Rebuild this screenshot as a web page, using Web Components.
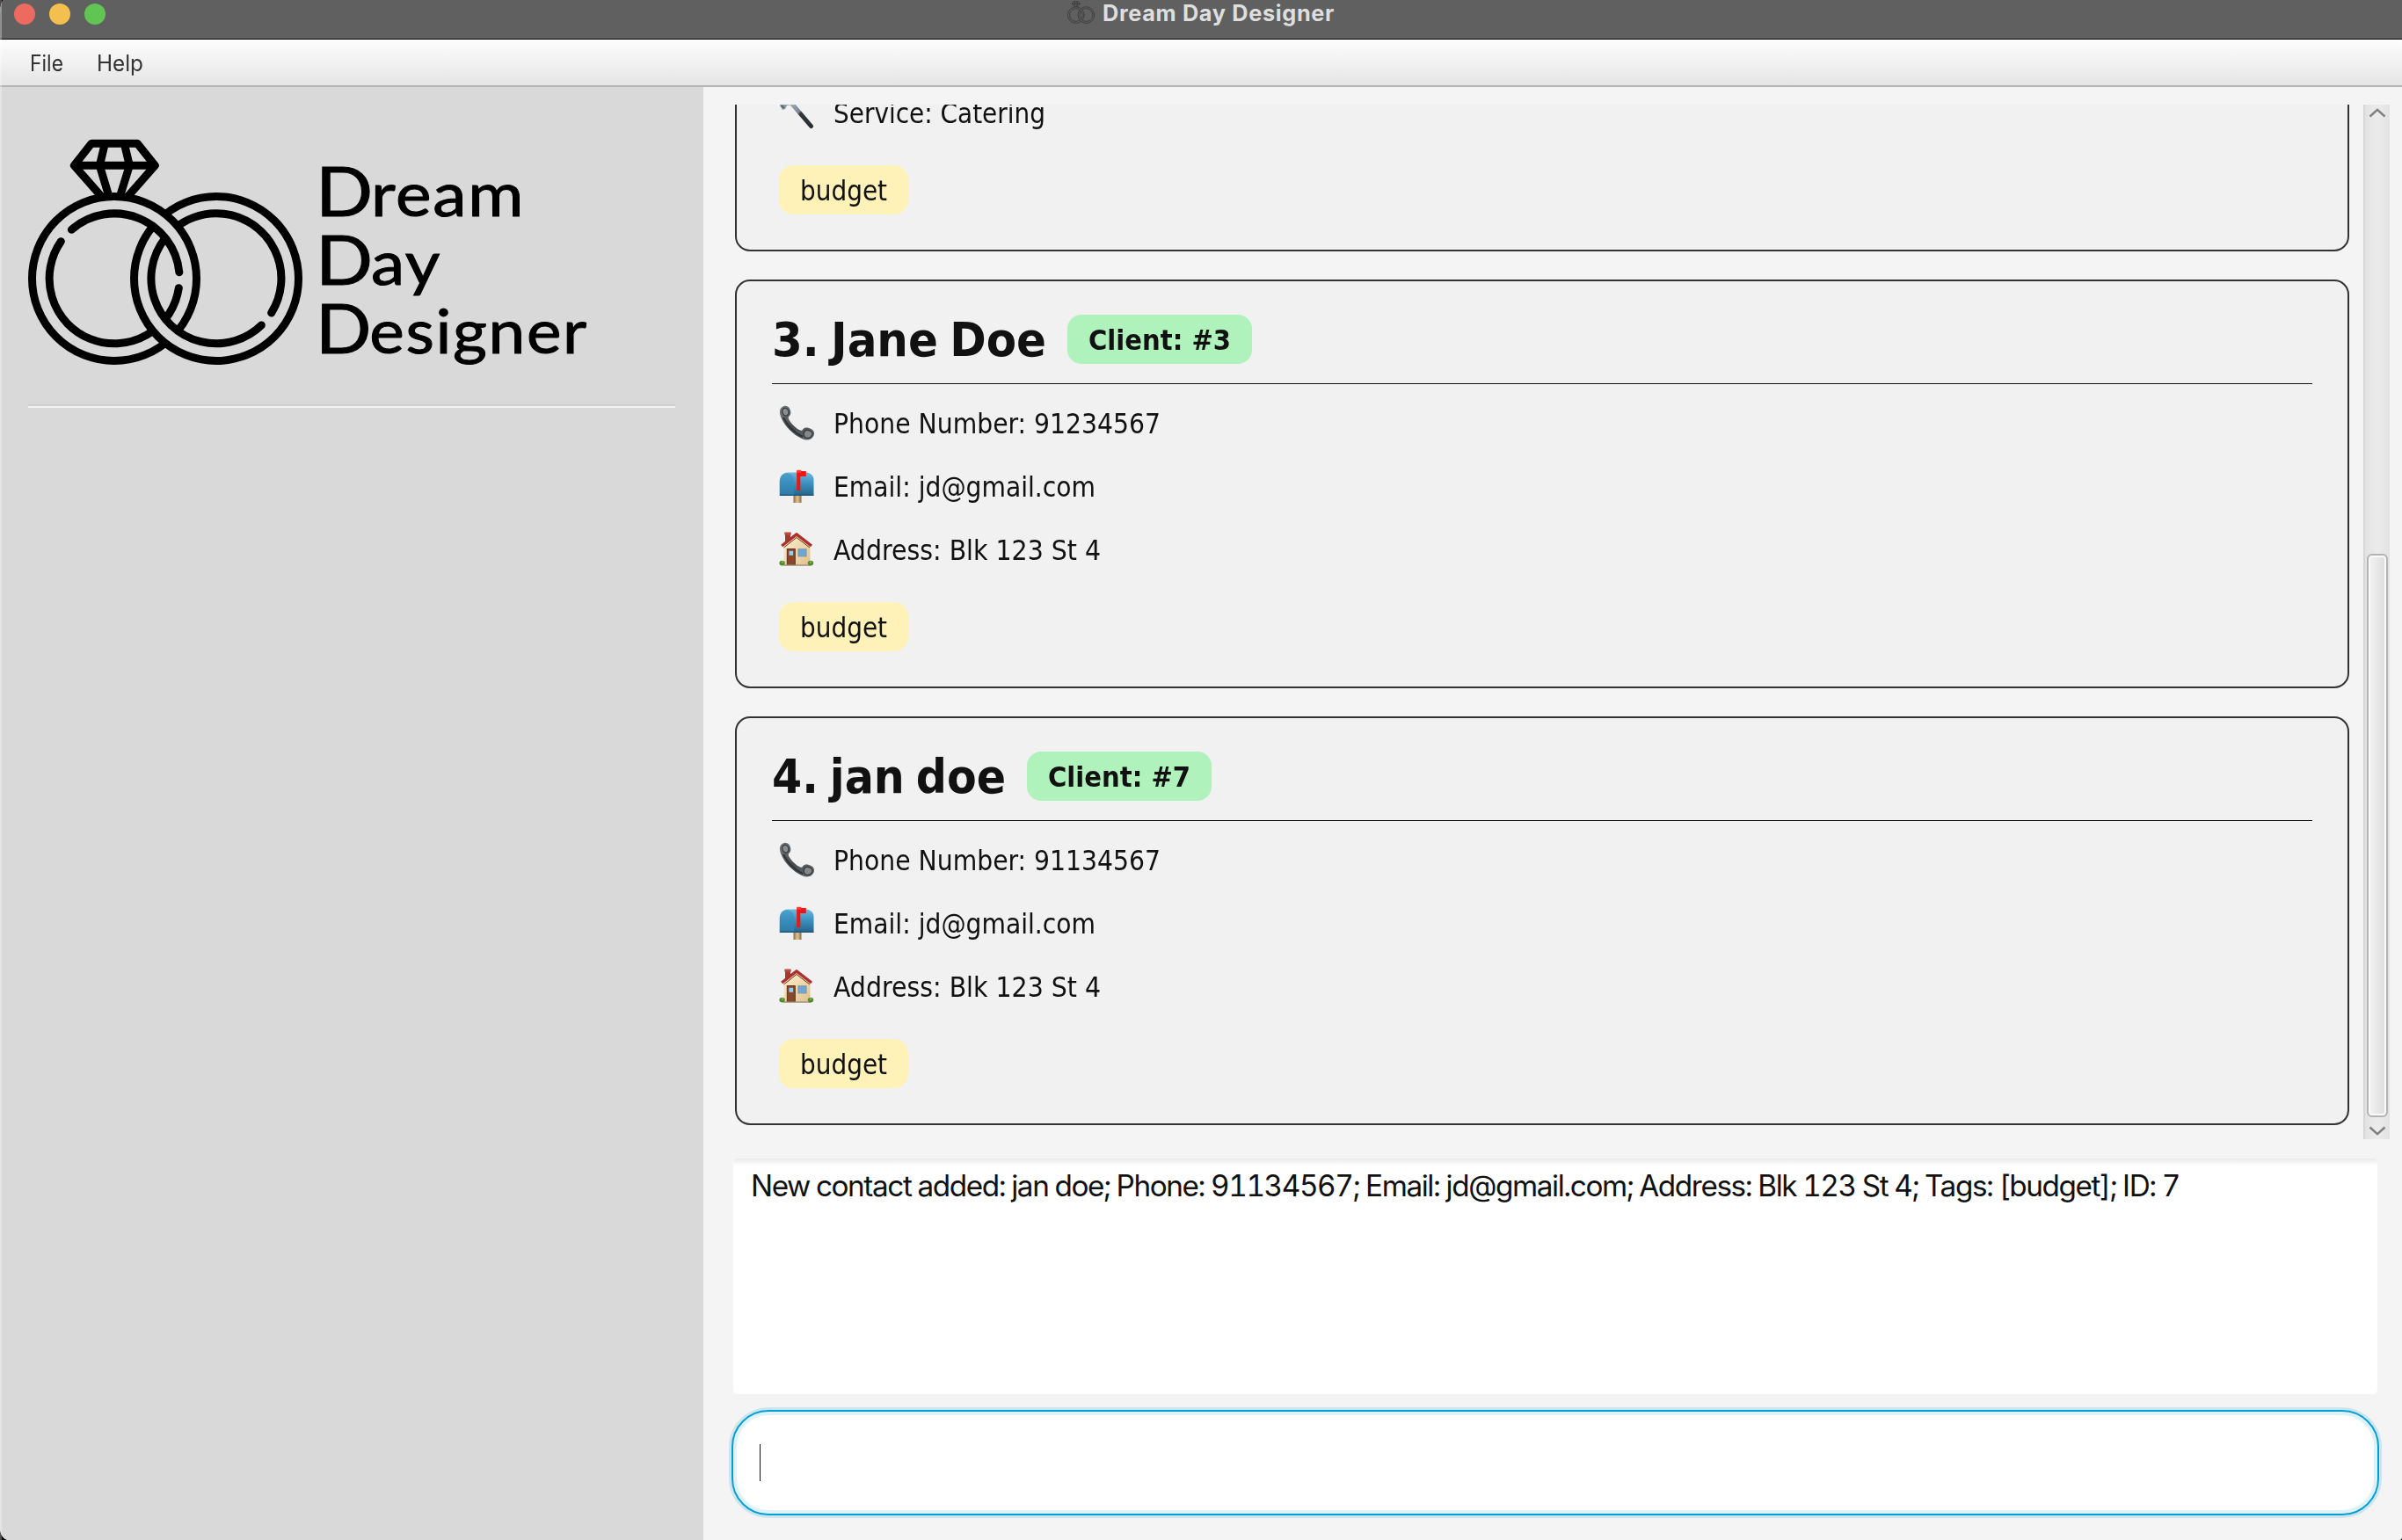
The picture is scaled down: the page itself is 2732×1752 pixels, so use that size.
<!DOCTYPE html>
<html lang="en">
<head>
<meta charset="utf-8">
<title>Dream Day Designer</title>
<style>
html, body { margin: 0; height: 100%; background: #000; }
body { overflow: hidden; }
</style>
</head>
<body>
<dream-app></dream-app>
<script>
function define(name, html, setup) {
  const tpl = document.createElement('template');
  tpl.innerHTML = html.trim();
  customElements.define(name, class extends HTMLElement {
    connectedCallback() {
      if (this.shadowRoot) return;
      const root = this.attachShadow({ mode: 'open' });
      root.append(tpl.content.cloneNode(true));
      if (setup) setup(this, root);
    }
  });
}

/* A single line of text set to a given advance width:
   by horizontal scale, or by tracking when the "track" attribute is present. */
define('fit-text', `
<style>
:host { display: flex; flex: none; }
span { display: block; flex: none; transform-origin: 0 50%; white-space: pre; }
:host([initial]) span::first-letter { font-size: 77px; line-height: 0; letter-spacing: -2px; }
</style><span></span>`, (el, root) => {
  const span = root.querySelector('span');
  span.textContent = el.getAttribute('text');
  const want = parseFloat(el.getAttribute('w'));
  if (!want) return;
  const have = span.getBoundingClientRect().width;
  if (el.hasAttribute('track')) {
    span.style.letterSpacing = (want - have) / span.textContent.length + 'px';
  } else {
    span.style.transform = 'scaleX(' + want / have + ')';
  }
  el.style.width = want + 'px';
});

define('rings-logo', `
<style>
:host { display: block; flex: none; color: #000; }
svg { display: block; width: 100%; height: 100%; }
</style>
<svg viewBox="36 48 960 780" fill="none" stroke="currentColor" stroke-width="27" stroke-linecap="round" stroke-linejoin="round">
  <mask id="l" maskUnits="userSpaceOnUse" x="0" y="0" width="1020" height="870">
    <rect width="1020" height="870" fill="#fff" stroke="none"/>
    <path d="M426.750 531A251.250 251.250 0 0 0 929.250 531" stroke="#000" stroke-width="58.500" stroke-linecap="butt"/>
  </mask>
  <mask id="r" maskUnits="userSpaceOnUse" x="0" y="0" width="1020" height="870">
    <rect width="1020" height="870" fill="#fff" stroke="none"/>
    <path d="M78.750 531A251.250 251.250 0 0 1 581.250 531" stroke="#000" stroke-width="58.500" stroke-linecap="butt"/>
  </mask>
  <g mask="url(#l)">
    <circle cx="330" cy="531" r="280.500"/>
    <path d="M184 364A222 222 0 0 1 551.500 509M550 563A222 222 0 1 1 148 404"/>
  </g>
  <g mask="url(#r)">
    <circle cx="678" cy="531" r="280.500"/>
    <path d="M832 690A222 222 0 1 1 866 648"/>
  </g>
  <path d="M284 248L193 145L252 70H409L469 145L378 248M193 145H469M297 74L280 145L311 248M365 74L382 145L350 248"/>
</svg>`);

define('title-bar', `
<style>
:host { display: flex; box-sizing: border-box; height: 45px; background: #606060; border-bottom: 1px solid #000; padding-left: 16px; }
.lights { display: flex; gap: 16px; padding-top: 4px; width: 1198px; flex: none; }
i { width: 24px; height: 24px; border-radius: 50%; background: #ed6a5e; }
i:nth-child(2) { background: #f5bf4f; }
i:nth-child(3) { background: #61c554; }
rings-logo { width: 32px; height: 26px; margin-top: 1px; color: #3b3b3b; }
fit-text { margin-left: 8px; font: 700 25.300px/32px Inter, sans-serif; color: #dedede; margin-top: -1px; }
</style>
<div class="lights"><i></i><i></i><i></i></div>
<rings-logo></rings-logo>
<fit-text text="Dream Day Designer" w="264" track></fit-text>`);

define('menu-bar', `
<style>
:host { display: flex; box-sizing: border-box; height: 54px; padding: 0 0 0 34px; gap: 38px; background: linear-gradient(#fdfdfd, #f1f1f1 50%, #e5e5e5); border-bottom: 2px solid #b5b5b5; color: #333; font: 400 25px/54px Inter, sans-serif; }
</style>
<fit-text text="File" w="38"></fit-text><fit-text text="Help" w="53"></fit-text>`);

define('side-panel', `
<style>
:host { display: block; box-sizing: border-box; width: 800px; flex: none; background: #d9d9d9; padding: 57px 32px 0; }
.brand { display: flex; height: 304px; }
rings-logo { width: 320px; height: 260px; }
.words { display: flex; flex-direction: column; margin: 25px 0 0 7px; font: 400 69px/78px Lato, sans-serif; letter-spacing: 1.500px; color: #000; -webkit-text-stroke: 1px #000; }
.line { height: 2px; background: #cfcfcf; border-bottom: 2px solid #f4f4f4; }
</style>
<div class="brand"><rings-logo></rings-logo>
<div class="words"><fit-text text="Dream" w="238" initial></fit-text><fit-text text="Day" w="143" initial></fit-text><fit-text text="Designer" w="310" initial></fit-text></div></div>
<div class="line"></div>`);

const icons = {
  phone: `<defs><linearGradient id="g" x1="0" y1="0" x2="1" y2="1"><stop offset="0" stop-color="#777b7d"/><stop offset=".5" stop-color="#474b4d"/><stop offset="1" stop-color="#6a6e70"/></linearGradient></defs>
  <path d="M3 2.500C6 -.3 10 .2 12 3.500C14 7 13.800 10.500 11.500 12.500C10.200 13.700 10.500 15.500 13 19C16 23 20 26.500 23.500 28.300C25.500 29.300 26.300 28.600 27.300 27.200C29 25 33 25 37 27.200C40.500 29.200 41 33 38.500 36.300C36 39.700 31.500 40.500 26.500 38.300C16 33.500 6.500 24 2.200 13.500C.3 9 .3 5 3 2.500Z" fill="url(#g)"/>
  <path d="M4.500 4.500C6.500 2.500 9 3 10.300 5.500C11.500 8 11 10 9.500 11.500C7.500 12.500 6 12 4.800 10C3.500 7.500 3.300 5.700 4.500 4.500Z" fill="#8c8f90" stroke="#3b3e40" stroke-width="1.300"/>
  <path d="M28.500 31C29.500 28 32.500 27.500 36 29.500C38.500 31 38.600 33.300 36.800 35.500C35 37.500 32.500 37.700 30.500 36.800C28.300 35.700 27.800 33.500 28.500 31Z" fill="#85888a" stroke="#36393b" stroke-width="1.300"/>
  <path d="M5 14C9.500 23 17.500 31.500 27 36" fill="none" stroke="#303335" stroke-width="2"/>`,
  mail: `<defs><linearGradient id="g" x1="0" y1="0" x2="0" y2="1"><stop offset="0" stop-color="#6cb9dd"/><stop offset=".45" stop-color="#3c93c1"/><stop offset="1" stop-color="#27628a"/></linearGradient><linearGradient id="w"><stop offset="0" stop-color="#8d6b42"/><stop offset=".5" stop-color="#e2c594"/><stop offset="1" stop-color="#8d6b42"/></linearGradient></defs>
  <rect x="16.500" y="30" width="9" height="9" fill="url(#w)"/>
  <path d="M.8 31V14C1.200 8 4.500 5 10 4.500H31C36.500 5 39.300 8.500 39.500 13V31Z" fill="url(#g)"/>
  <path d="M.8 31V14C1.500 8.500 4.500 5.500 9 5.200C14 5.800 17 9 17.300 14V31Z" fill="#348dbb" opacity=".55"/>
  <path d="M1 30.200H39.300" stroke="#1f587d" stroke-width="1.400"/>
  <path d="M20.200 3H30.800V9H24.300V25H20.200Z" fill="#f0160e"/>
  <rect x="20.200" y="1.800" width="5" height="3" fill="#ff3a30"/>`,
  house: `<defs><linearGradient id="g" x1="0" y1="0" x2="1" y2="1"><stop offset="0" stop-color="#fff0cf"/><stop offset="1" stop-color="#dfc191"/></linearGradient></defs>
  <path d="M7 1.500H13V13H7Z" fill="#a33a32"/><path d="M6.300 .5H13.700V3.500H6.300Z" fill="#bd4a40"/>
  <path d="M5.500 37.500V15.500L20 3.500L35.500 15.500V37.500Z" fill="url(#g)"/>
  <path d="M3.200 16L20 2.800L37 16" fill="none" stroke="#ad302c" stroke-width="3.400" stroke-linejoin="round"/>
  <path d="M5.500 18L20 6.500L35 18" fill="none" stroke="#713227" stroke-width="1"/>
  <rect x="9.300" y="19.500" width="9" height="18" fill="#89482b" stroke="#5d2f20"/><rect x="11.500" y="21.800" width="4.600" height="5" fill="#8dd0f5"/>
  <rect x="22" y="19.800" width="9" height="8" fill="#67aada" stroke="#8797a0" stroke-width="1.200"/>
  <path d="M5 38H36" stroke="#9d8a67" stroke-width="1.400"/>
  <ellipse cx="3.600" cy="35.600" rx="3.200" ry="2.900" fill="#548a2e"/><ellipse cx="36" cy="35.600" rx="3.200" ry="2.900" fill="#548a2e"/>
  <circle cx="4" cy="34.500" r="1.200" fill="#82b34e"/><circle cx="36" cy="34.500" r="1.200" fill="#82b34e"/>`,
  hammer: `<defs><linearGradient id="g" gradientUnits="userSpaceOnUse" x1="12" y1="10" x2="37" y2="37"><stop offset="0" stop-color="#a5aebb"/><stop offset=".38" stop-color="#7e8797"/><stop offset=".45" stop-color="#333739"/><stop offset="1" stop-color="#2b2e30"/></linearGradient></defs>
  <path d="M13 8L36.500 35.500" stroke="url(#g)" stroke-width="5" stroke-linecap="round"/>
  <path d="M1 12L3 7L12 1L19 6L14 11L9 12L7 16L4 17Z" fill="#8d99a2"/><path d="M2.500 12L6 15" stroke="#59656c" stroke-width="2"/>`
};

define('detail-row', `
<style>
:host { display: flex; gap: 22px; height: 40px; padding-left: 8px; }
svg { width: 40px; height: 40px; flex: none; }
fit-text { font: 400 32px/42px "DejaVu Sans Condensed", "DejaVu Sans", sans-serif; font-stretch: condensed; }
</style><svg viewBox="0 0 40 40"></svg>`, (el, root) => {
  root.querySelector('svg').innerHTML = icons[el.getAttribute('icon')];
  const t = document.createElement('fit-text');
  t.setAttribute('text', el.getAttribute('text'));
  t.setAttribute('w', el.getAttribute('w'));
  root.append(t);
});

define('label-chip', `
<style>
:host { display: flex; box-sizing: border-box; height: 56px; padding: 0 24px; border-radius: 16px; background: #fff2b8; font: 400 32px/58px "DejaVu Sans Condensed", "DejaVu Sans", sans-serif; font-stretch: condensed; flex: none; width: max-content; }
:host([kind=client]) { background: #b0f2bc; font-weight: 700; }
</style>`, (el, root) => {
  const t = document.createElement('fit-text');
  t.setAttribute('text', el.getAttribute('text'));
  t.setAttribute('w', el.getAttribute('w'));
  root.append(t);
});

define('contact-card', `
<style>
:host { display: flex; flex-direction: column; justify-content: flex-end; box-sizing: border-box; height: 465px; flex: none; border: 2px solid #333; border-radius: 17px; background: #f1f1f1; padding: 0 40px 40px; color: #111; }
.rows { display: flex; flex-direction: column; gap: 32px; margin-bottom: 40px; }
label-chip.tag { margin-left: 8px; }
</style>
<slot name="head"></slot><div class="rows"><slot></slot></div><label-chip class="tag" text="budget" w="99"></label-chip>`);

define('card-head', `
<style>
:host { display: flex; gap: 24px; height: 79px; box-sizing: border-box; border-bottom: 1px solid #111; margin-bottom: 24px; align-items: flex-start; }
.name { font: 700 53.300px/59px "DejaVu Sans Condensed", "DejaVu Sans", sans-serif; font-stretch: condensed; word-spacing: -4px; }
</style>`, (el, root) => {
  const name = document.createElement('fit-text');
  name.className = 'name';
  name.setAttribute('text', el.getAttribute('name'));
  name.setAttribute('w', el.getAttribute('w'));
  const chip = document.createElement('label-chip');
  chip.setAttribute('kind', 'client');
  chip.setAttribute('text', el.getAttribute('client'));
  chip.setAttribute('w', '162');
  root.append(name, chip);
});

define('scroll-rail', `
<style>
:host { display: flex; flex-direction: column; align-items: center; box-sizing: border-box; width: 30px; flex: none; border-left: 2px solid #d6d6d6; background: linear-gradient(90deg, #e2e2e2, #ececec 50%, #e2e2e2); padding: 4px 0; }
svg { width: 20px; height: 11px; display: block; flex: none; }
svg:last-child { margin-top: auto; }
.thumb { box-sizing: border-box; width: 24px; height: 641px; margin-top: 496px; border: 2px solid #b4b4b4; border-radius: 6px; box-shadow: inset 0 0 0 2px #fafafa; background: linear-gradient(90deg, #efefef 20%, #dcdcdc); flex: none; }
</style>
<svg viewBox="0 0 20 11" fill="none" stroke="#7f7f7f" stroke-width="2.400"><path d="M1.500 9.500L10 1.800L18.500 9.500"/></svg>
<div class="thumb"></div>
<svg viewBox="0 0 20 11" fill="none" stroke="#7f7f7f" stroke-width="2.400"><path d="M1.500 1.500L10 9.200L18.500 1.500"/></svg>`);

define('contact-list', `
<style>
:host { display: flex; height: 1177px; gap: 16px; overflow: hidden; flex: none; }
.cards { display: flex; flex-direction: column; justify-content: flex-end; gap: 32px; padding: 0 0 16px 2px; width: 1836px; overflow: hidden; }
</style>
<div class="cards">
  <contact-card><detail-row icon="hammer" text="Service: Catering" w="241"></detail-row></contact-card>
  <contact-card><card-head slot="head" name="3. Jane Doe" w="312" client="Client: #3"></card-head>
    <detail-row icon="phone" text="Phone Number: 91234567" w="372"></detail-row>
    <detail-row icon="mail" text="Email: jd@gmail.com" w="298"></detail-row>
    <detail-row icon="house" text="Address: Blk 123 St 4" w="304"></detail-row></contact-card>
  <contact-card><card-head slot="head" name="4. jan doe" w="266" client="Client: #7"></card-head>
    <detail-row icon="phone" text="Phone Number: 91134567" w="372"></detail-row>
    <detail-row icon="mail" text="Email: jd@gmail.com" w="298"></detail-row>
    <detail-row icon="house" text="Address: Blk 123 St 4" w="304"></detail-row></contact-card>
</div>
<scroll-rail></scroll-rail>`);

define('result-box', `
<style>
:host { display: block; box-sizing: border-box; width: 1870px; height: 268px; margin-top: 22px; padding: 6px 0 0 20px; background: linear-gradient(#eaeaea, #fff 8px); border-radius: 5px; font: 400 33.300px/51px Inter, sans-serif; font-variant-numeric: tabular-nums; word-spacing: -.5px; color: #111; flex: none; }
</style>
<fit-text text="New contact added: jan doe; Phone: 91134567; Email: jd@gmail.com; Address: Blk 123 St 4; Tags: [budget]; ID: 7" w="1625" track></fit-text>`);

define('command-box', `
<style>
:host { display: flex; align-items: center; box-sizing: border-box; width: 1874px; height: 120px; margin: 18px 0 0 -2px; padding-left: 30px; border: 2px solid #039ed3; border-radius: 42px; background: #fff; box-shadow: 0 0 0 3px rgba(3,158,211,.16), inset 0 0 0 4px #def2fa; flex: none; }
i { width: 1px; height: 42px; background: #111; }
</style><i></i>`);

define('dream-app', `
<style>
:host { display: flex; flex-direction: column; width: 2732px; height: 1752px; overflow: hidden; background: #f4f4f4; border-radius: 5px 0 3px 10px / 15px 0 3px 14px; }
.body { display: flex; flex: 1; min-height: 0; }
.main { display: flex; flex-direction: column; padding: 20px 14px 0 34px; flex: 1; }
.edge { position: absolute; left: 0; top: 0; width: 2px; height: 1752px; background: rgba(255,255,255,.3); }
</style>
<title-bar></title-bar><menu-bar></menu-bar>
<div class="body"><side-panel></side-panel>
<div class="main"><contact-list></contact-list><result-box></result-box><command-box></command-box></div></div>
<div class="edge"></div>`);
</script>
</body>
</html>
